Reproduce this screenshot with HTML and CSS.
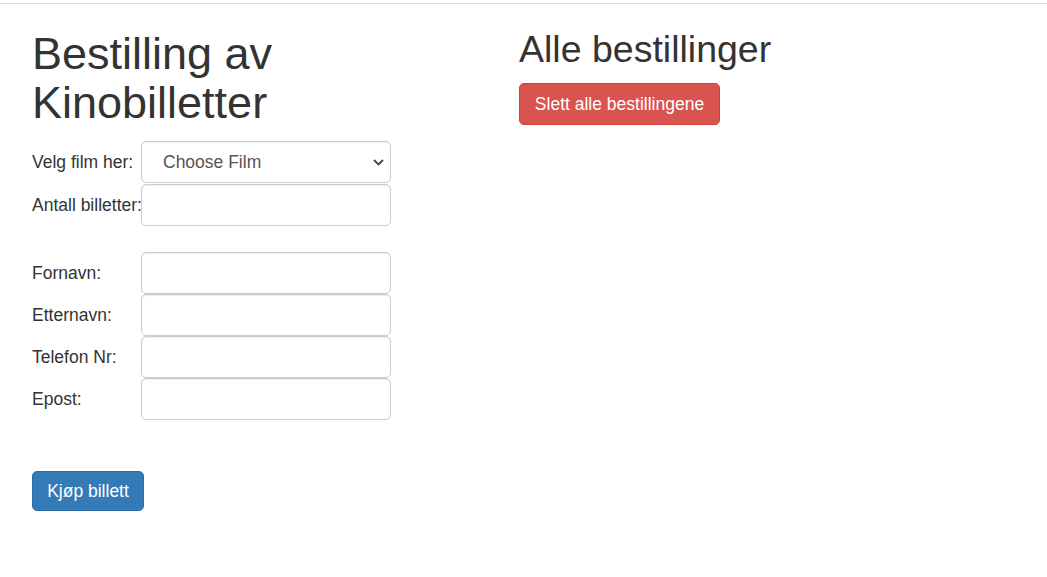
FILE: index.html
```html
<!DOCTYPE html>
<html lang="no">
<head>
<meta charset="utf-8">
<title>Kinobilletter</title>
<link rel="stylesheet" href="styles.css">
</head>
<body>
<div class="topline"></div>
<div class="page">
  <section class="col-left">
    <h1 class="title">Bestilling av<br>Kinobilletter</h1>
    <form class="form">
      <div class="row">
        <label class="lbl">Velg film her:</label>
        <div class="select-wrap">
          <select class="ctrl select">
            <option>Choose Film</option>
          </select>
          <svg class="chev" width="11" height="7" viewBox="0 0 11 7"><path d="M1 1 L5.5 5.5 L10 1" fill="none" stroke="#444" stroke-width="1.8"/></svg>
        </div>
      </div>
      <div class="row row-tight">
        <label class="lbl">Antall billetter:</label>
        <input class="ctrl" type="text">
      </div>
      <div class="spacer"></div>
      <div class="row">
        <label class="lbl">Fornavn:</label>
        <input class="ctrl" type="text">
      </div>
      <div class="row">
        <label class="lbl">Etternavn:</label>
        <input class="ctrl" type="text">
      </div>
      <div class="row">
        <label class="lbl">Telefon Nr:</label>
        <input class="ctrl" type="text">
      </div>
      <div class="row">
        <label class="lbl">Epost:</label>
        <input class="ctrl" type="text">
      </div>
      <button type="button" class="btn btn-primary">Kjøp billett</button>
    </form>
  </section>
  <section class="col-right">
    <h2 class="subtitle">Alle bestillinger</h2>
    <button type="button" class="btn btn-danger">Slett alle bestillingene</button>
  </section>
</div>
</body>
</html>
```

FILE: styles.css
```css
html, body {
  margin: 0;
  padding: 0;
  background: #fff;
}
body {
  font-family: "Liberation Sans", Arial, Helvetica, sans-serif;
  font-size: 17.5px;
  color: #333;
}
.topline {
  margin-top: 3px;
  height: 1px;
  background: #dcdcdc;
}
.page {
  display: grid;
  grid-template-columns: 487px 1fr;
  padding-left: 32px;
}
.col-left, .col-right {
  display: flex;
  flex-direction: column;
  align-items: flex-start;
}
.title {
  margin: 25px 0 14px;
  font-size: 45px;
  line-height: 49px;
  font-weight: 400;
  color: #333;
}
.subtitle {
  margin: 25px 0 14px;
  font-size: 37.5px;
  line-height: 40px;
  font-weight: 400;
  color: #333;
}
.form {
  display: flex;
  flex-direction: column;
  align-items: flex-start;
}
.row {
  display: flex;
  align-items: center;
  height: 42px;
}
.row-tight {
  margin-top: 1px;
}
.lbl {
  width: 109px;
  font-size: 17.5px;
  color: #333;
  white-space: nowrap;
}
.ctrl {
  box-sizing: border-box;
  width: 250px;
  height: 42px;
  margin: 0;
  padding: 7px 14px;
  font-family: inherit;
  font-size: 17.5px;
  color: #555;
  background: #fff;
  border: 1px solid #ccc;
  border-radius: 5px;
  box-shadow: inset 0 1px 1px rgba(0,0,0,.075);
  outline: none;
}
.select-wrap {
  position: relative;
}
.select {
  appearance: none;
  -webkit-appearance: none;
  padding-left: 21px;
}
.chev {
  position: absolute;
  right: 7px;
  top: 18px;
  pointer-events: none;
}
.spacer {
  height: 26px;
}
.btn {
  box-sizing: border-box;
  font-family: inherit;
  font-size: 17.5px;
  line-height: 20px;
  color: #fff;
  border: 1px solid transparent;
  border-radius: 5px;
  cursor: pointer;
}
.btn-primary {
  margin-top: 51px;
  width: 112px;
  height: 40px;
  padding: 0;
  background: #337ab7;
  border-color: #2e6da4;
}
.btn-danger {
  width: 201px;
  height: 42px;
  padding: 0;
  background: #d9534f;
  border-color: #d43f3a;
}
```
